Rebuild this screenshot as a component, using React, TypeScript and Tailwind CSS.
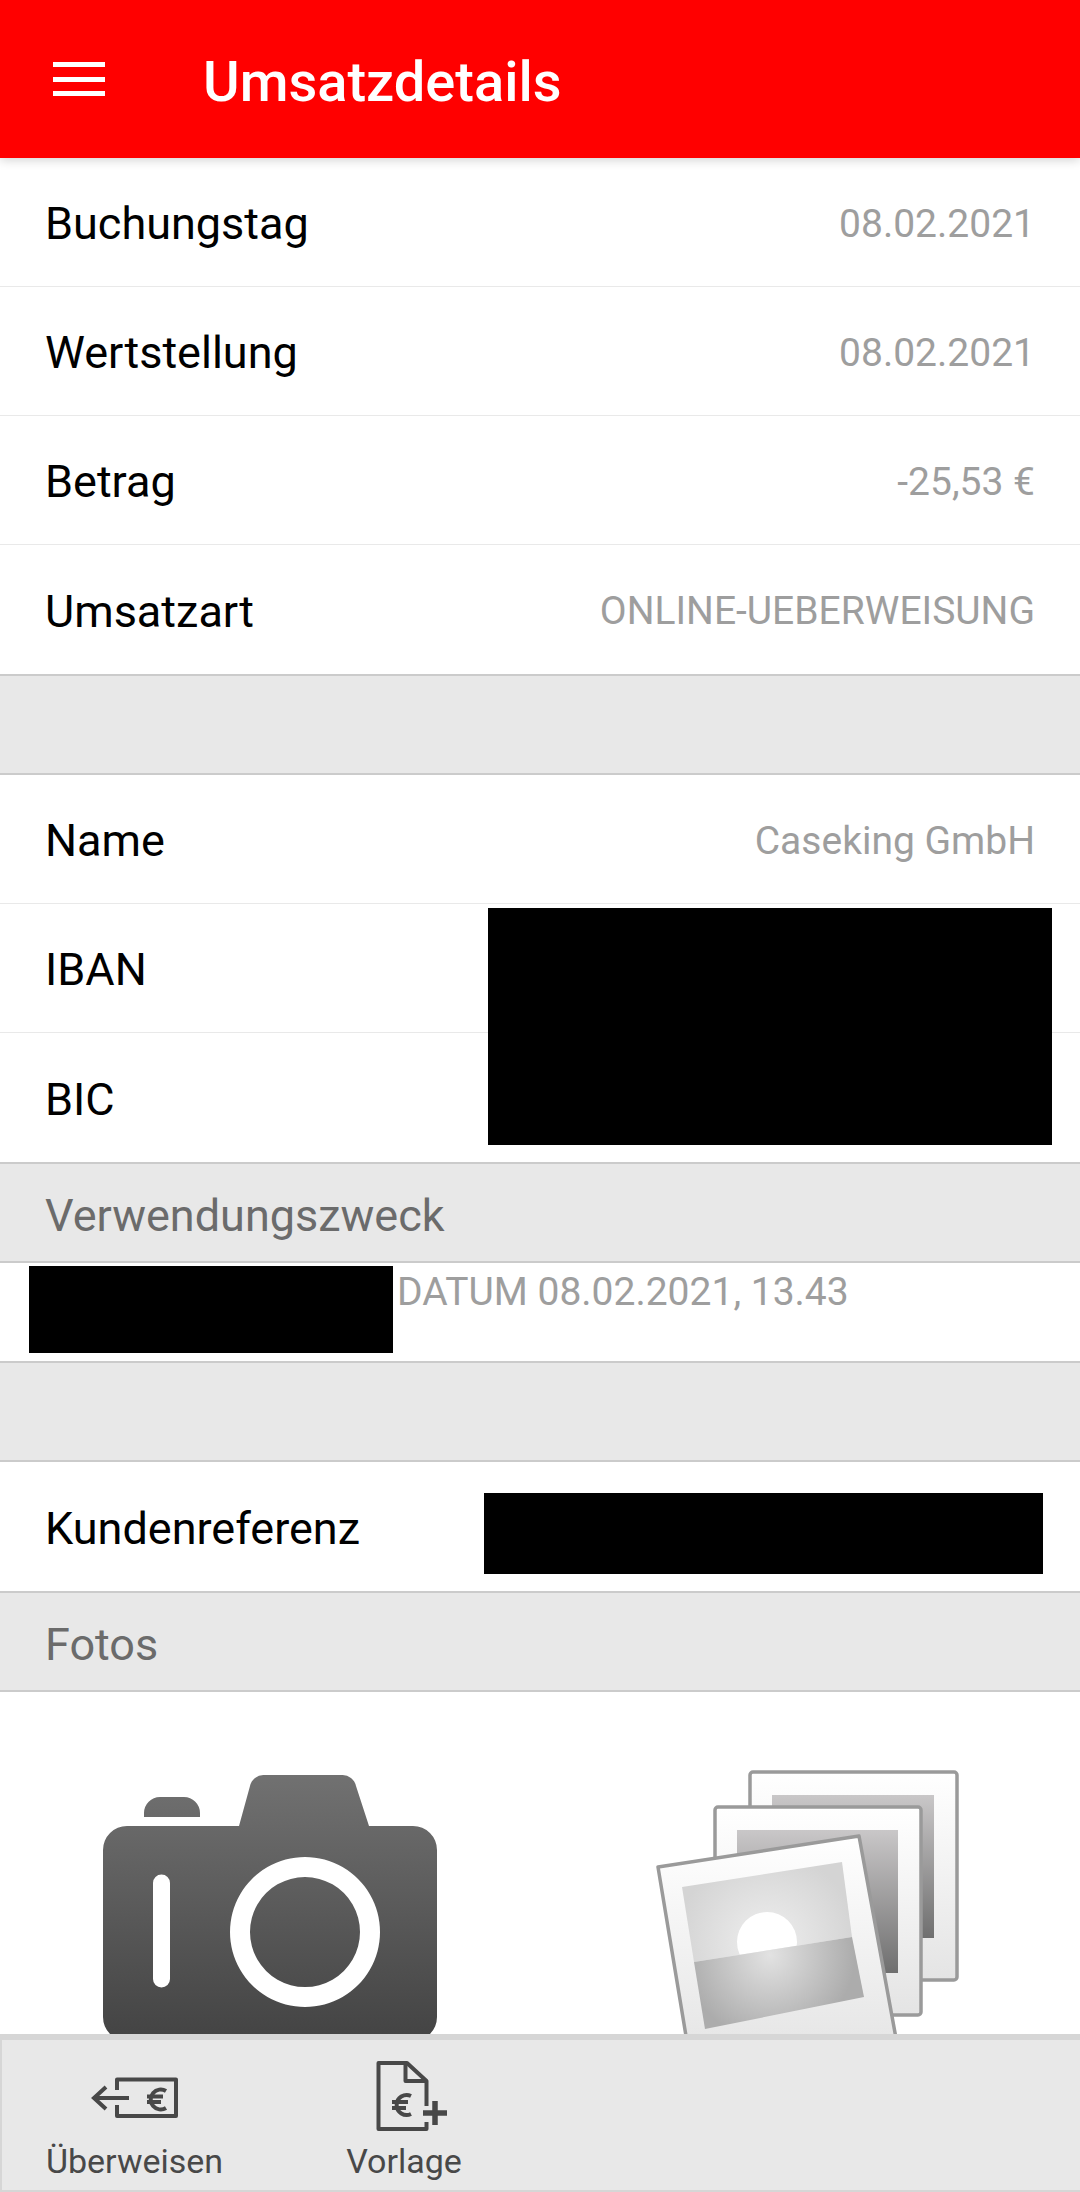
import React from 'react';

type RowProps = {
  label: string;
  value?: string;
  last?: boolean;
};

function Row({ label, value, last }: RowProps) {
  return (
    <div className={`flex h-[129px] items-center justify-between pl-[45px] pr-[45px] pt-[4px] bg-white ${last ? '' : 'border-b border-[#e9e9e9]'}`}>
      <span className="text-[45px] text-black">{label}</span>
      {value && <span className="text-[39px] text-[#9e9e9e]">{value}</span>}
    </div>
  );
}

function Section({ label }: { label?: string }) {
  return (
    <div className="flex h-[101px] items-center border-y-2 border-[#cbcbcb] bg-[#e8e8e8] px-[45px] pt-[6px]">
      {label && <span className="text-[45px] text-[#6b6b6b]">{label}</span>}
    </div>
  );
}

function CameraIcon() {
  return (
    <svg width="334" height="260" viewBox="103 1775 334 260" className="block">
      <defs>
        <linearGradient id="cam" x1="0" y1="0" x2="0" y2="1">
          <stop offset="0" stopColor="#717171" />
          <stop offset="1" stopColor="#434343" />
        </linearGradient>
      </defs>
      <path
        fill="url(#cam)"
        fillRule="evenodd"
        d="M144 1817 v-4 a16 16 0 0 1 16 -16 h24 a16 16 0 0 1 16 16 v4 z
           M127 1826 H239 L250 1786 a14 14 0 0 1 14 -11 h78 a14 14 0 0 1 14 11 L369 1826 H413 a24 24 0 0 1 24 24 V2017 a24 24 0 0 1 -24 24 H127 a24 24 0 0 1 -24 -24 V1850 a24 24 0 0 1 24 -24 z
           M153 1883 V1979 a8.5 8.5 0 0 0 17 0 V1883 a8.5 8.5 0 0 0 -17 0 z
           M305 1857 a75 75 0 1 0 0.01 0 z M305 1877 a55 55 0 1 1 -0.01 0 z"
      />
    </svg>
  );
}

function PhotosIcon() {
  return (
    <svg width="312" height="290" viewBox="650 1765 312 290" className="block">
      <defs>
        <linearGradient id="frame" x1="0" y1="0" x2="0" y2="1">
          <stop offset="0" stopColor="#ffffff" />
          <stop offset="1" stopColor="#e4e4e4" />
        </linearGradient>
        <linearGradient id="pic" x1="0" y1="0" x2="0" y2="1">
          <stop offset="0" stopColor="#c9c7c8" />
          <stop offset="1" stopColor="#6f6f6f" />
        </linearGradient>
        <radialGradient id="water" gradientUnits="userSpaceOnUse" cx="770" cy="1955" r="85">
          <stop offset="0" stopColor="#e2e2e2" />
          <stop offset="1" stopColor="#acacac" />
        </radialGradient>
        <radialGradient id="sky" gradientUnits="userSpaceOnUse" cx="767" cy="1942" r="90">
          <stop offset="0" stopColor="#efefef" />
          <stop offset="1" stopColor="#d4d4d4" />
        </radialGradient>
        <clipPath id="skyClip">
          <polygon points="682,1887 842,1862 852,1937 694,1962" />
        </clipPath>
      </defs>
      <rect x="750" y="1772" width="207" height="208" rx="3" fill="url(#frame)" stroke="#9a9a9a" strokeWidth="3.5" />
      <rect x="772" y="1795" width="162" height="143" fill="url(#pic)" />
      <rect x="715" y="1807" width="206" height="208" rx="3" fill="url(#frame)" stroke="#9a9a9a" strokeWidth="3.5" />
      <rect x="737" y="1830" width="161" height="143" fill="url(#pic)" />
      <polygon points="658,1867 859,1836 900,2060 690,2060" fill="url(#frame)" stroke="#9a9a9a" strokeWidth="3.5" strokeLinejoin="round" />
      <polygon points="682,1887 842,1862 852,1937 694,1962" fill="url(#sky)" />
      <circle cx="767" cy="1942" r="30" fill="#ffffff" clipPath="url(#skyClip)" />
      <polygon points="694,1962 852,1937 864,1997 705,2029" fill="url(#water)" />
    </svg>
  );
}

function TransferIcon() {
  return (
    <svg width="88" height="42" viewBox="91 2077 88 42" fill="none" stroke="#484848" strokeWidth="4" className="block">
      <path d="M117 2090 V2079.5 H176 V2116 H117 V2105" strokeLinejoin="round" />
      <path d="M129 2098 H94 M106 2087 L94 2098 L106 2109" />
      <path d="M166 2091 a10 10 0 1 0 0 17 M147 2096.5 H163 M147 2102 H161" />
    </svg>
  );
}

function TemplateIcon() {
  return (
    <svg width="72" height="70" viewBox="376 2061 72 70" fill="none" stroke="#484848" strokeWidth="4" className="block">
      <path d="M426.5 2106 V2081 L407 2063 H378.5 V2129 H426.5 V2122" strokeLinejoin="round" />
      <path d="M405.5 2063 V2081 H426.5" strokeLinejoin="round" />
      <path d="M411 2096 a10 10 0 1 0 0 18 M392 2102 H408 M392 2108 H406" />
      <path d="M423 2113 H447 M435 2101 V2125" strokeWidth="5.5" />
    </svg>
  );
}

export default function App() {
  return (
    <div className="flex h-[2192px] w-[1080px] flex-col overflow-hidden bg-white font-['Roboto',sans-serif]">
      <header className="z-10 flex h-[158px] shrink-0 items-center bg-[#ff0000] shadow-[0_2px_10px_rgba(0,0,0,0.18)]">
        <div className="ml-[53px] flex h-[34px] w-[52px] flex-col justify-between">
          <div className="h-[5px] bg-white" />
          <div className="h-[5px] bg-white" />
          <div className="h-[5px] bg-white" />
        </div>
        <h1 className="ml-[98px] mt-[6px] text-[56px] font-medium text-white">Umsatzdetails</h1>
      </header>

      <main className="min-h-0 flex-1 overflow-hidden">
        <Row label="Buchungstag" value="08.02.2021" />
        <Row label="Wertstellung" value="08.02.2021" />
        <Row label="Betrag" value="-25,53 €" />
        <Row label="Umsatzart" value="ONLINE-UEBERWEISUNG" last />
        <Section />

        <div className="relative">
          <Row label="Name" value="Caseking GmbH" />
          <Row label="IBAN" />
          <Row label="BIC" last />
          {/* redacted */}
          <div className="absolute left-[488px] top-[133px] h-[237px] w-[564px] bg-black" />
        </div>

        <Section label="Verwendungszweck" />
        <div className="flex h-[98px] items-start gap-[4px] bg-white pl-[29px] pt-[3px]">
          <div className="h-[87px] w-[364px] bg-black" />
          <span className="mt-[1px] text-[39px] leading-[50px] text-[#9e9e9e]">DATUM 08.02.2021, 13.43</span>
        </div>
        <Section />

        <div className="flex h-[129px] items-center justify-between bg-white pl-[45px] pr-[37px]">
          <span className="mt-[5px] text-[45px] text-black">Kundenreferenz</span>
          <div className="mt-[13px] h-[81px] w-[559px] bg-black" />
        </div>
        <Section label="Fotos" />

        <div className="flex bg-white">
          <div className="ml-[103px] mt-[83px]">
            <CameraIcon />
          </div>
          <div className="ml-[213px] mt-[73px]">
            <PhotosIcon />
          </div>
        </div>
      </main>

      <footer className="flex h-[158px] shrink-0 border-t-[6px] border-l-2 border-b-2 border-[#d6d6d6] bg-[#e8e8e8]">
        <div className="flex w-[265px] flex-col items-center">
          <div className="ml-[1px] mt-[37px]">
            <TransferIcon />
          </div>
          <span className="mt-[17px] text-[34px] text-[#484848]">Überweisen</span>
        </div>
        <div className="flex w-[274px] flex-col items-center">
          <div className="ml-[16px] mt-[21px]">
            <TemplateIcon />
          </div>
          <span className="mt-[5px] text-[34px] text-[#484848]">Vorlage</span>
        </div>
      </footer>
    </div>
  );
}
